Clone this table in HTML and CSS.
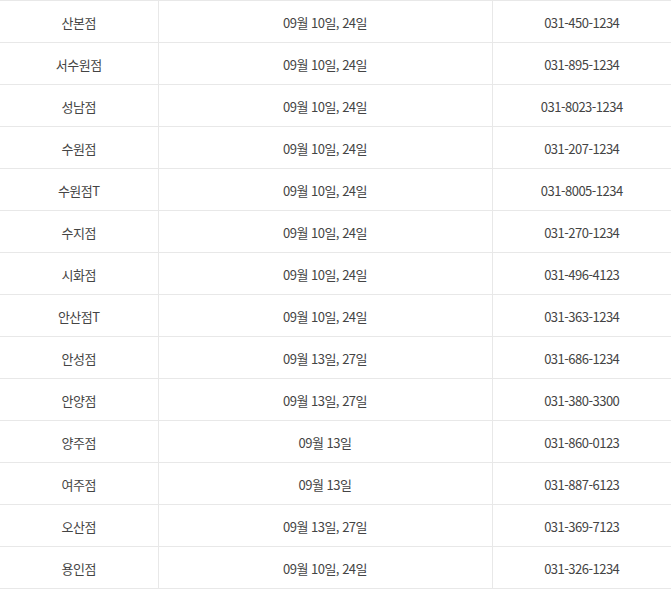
FILE: index.html
```html
<!DOCTYPE html>
<html lang="ko">
<head>
<meta charset="utf-8">
<link rel="stylesheet" href="styles.css">
</head>
<body>
<table class="branch-table">
  <colgroup><col class="c1"><col class="c2"><col class="c3"></colgroup>
  <tbody>
    <tr><td>산본점</td><td>09월 10일, 24일</td><td>031-450-1234</td></tr>
    <tr><td>서수원점</td><td>09월 10일, 24일</td><td>031-895-1234</td></tr>
    <tr><td>성남점</td><td>09월 10일, 24일</td><td>031-8023-1234</td></tr>
    <tr><td>수원점</td><td>09월 10일, 24일</td><td>031-207-1234</td></tr>
    <tr><td>수원점T</td><td>09월 10일, 24일</td><td>031-8005-1234</td></tr>
    <tr><td>수지점</td><td>09월 10일, 24일</td><td>031-270-1234</td></tr>
    <tr><td>시화점</td><td>09월 10일, 24일</td><td>031-496-4123</td></tr>
    <tr><td>안산점T</td><td>09월 10일, 24일</td><td>031-363-1234</td></tr>
    <tr><td>안성점</td><td>09월 13일, 27일</td><td>031-686-1234</td></tr>
    <tr><td>안양점</td><td>09월 13일, 27일</td><td>031-380-3300</td></tr>
    <tr><td>양주점</td><td>09월 13일</td><td>031-860-0123</td></tr>
    <tr><td>여주점</td><td>09월 13일</td><td>031-887-6123</td></tr>
    <tr><td>오산점</td><td>09월 13일, 27일</td><td>031-369-7123</td></tr>
    <tr><td>용인점</td><td>09월 10일, 24일</td><td>031-326-1234</td></tr>
  </tbody>
</table>
</body>
</html>
```
FILE: styles.css
```css
html, body {
  margin: 0;
  padding: 0;
  background: #fff;
}
.branch-table {
  width: 671px;
  border-collapse: collapse;
  table-layout: fixed;
  font-family: "Noto Sans CJK KR", "Noto Sans", sans-serif;
  font-size: 13px;
  color: #444;
  letter-spacing: -0.5px;
}
.c1 { width: 158px; }
.c2 { width: 334px; }
.c3 { width: 179px; }
.branch-table td {
  height: 40px;
  padding: 1px 0 0;
  text-align: center;
  vertical-align: middle;
  border-top: 1px solid #e8e8e8;
  border-bottom: 1px solid #e8e8e8;
  border-left: 1px solid #e8e8e8;
}
.branch-table td:first-child {
  border-left: none;
}
```
